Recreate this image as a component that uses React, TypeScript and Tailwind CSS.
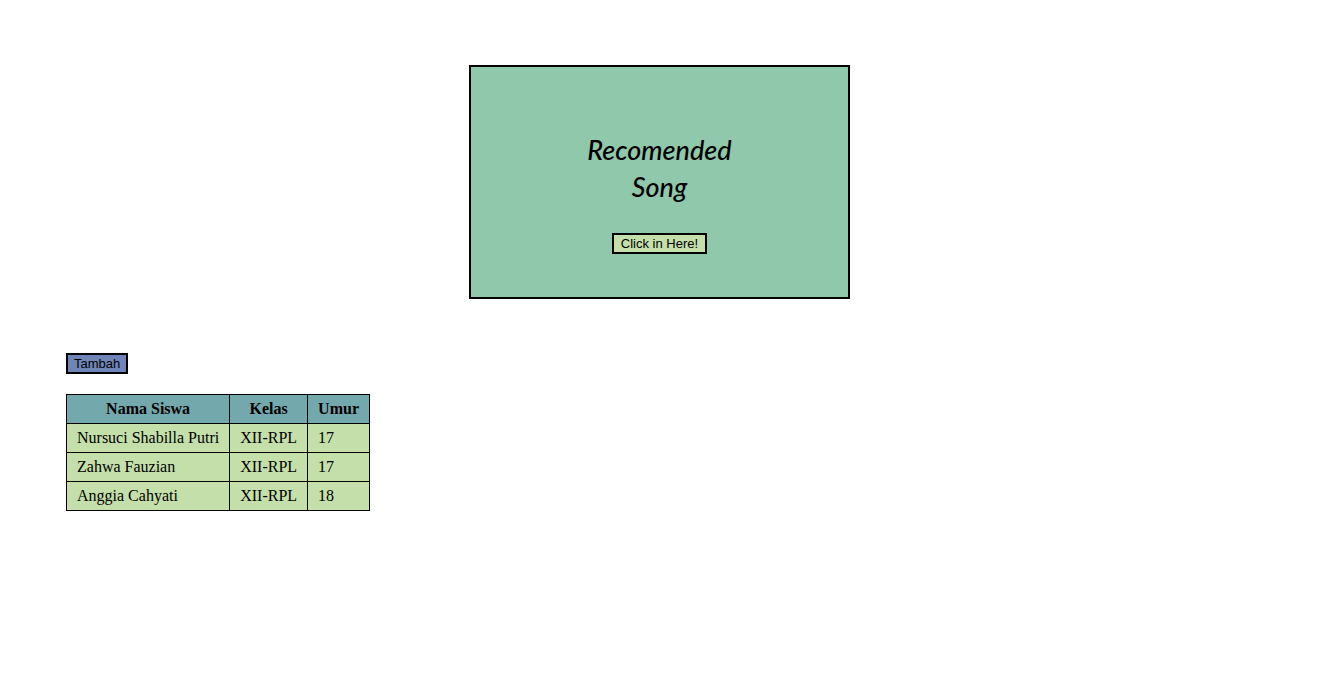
const students = [
  { name: "Nursuci Shabilla Putri", grade: "XII-RPL", age: 17 },
  { name: "Zahwa Fauzian", grade: "XII-RPL", age: 17 },
  { name: "Anggia Cahyati", grade: "XII-RPL", age: 18 },
];

const cell = "border border-black px-[10px] py-[5px]";
const button =
  "border-2 border-black font-['Liberation_Sans',sans-serif] text-[13px] leading-[17px] text-black";

function SongCard() {
  return (
    <section className="mx-auto flex w-full max-w-[381px] flex-col items-center border-2 border-black bg-[#90c8ac] pt-16 pb-[43px]">
      <h1 className="text-center font-['Lato',sans-serif] text-[27px] leading-[37px] font-medium italic">
        Recomended
        <br />
        Song
      </h1>
      <button type="button" className={`${button} mt-7 bg-[#c4dfaa] px-[7px]`}>
        Click in Here!
      </button>
    </section>
  );
}

function StudentTable() {
  return (
    <table className="mt-5 border-collapse bg-[#c4dfaa] text-[16px] leading-[18px]">
      <thead>
        <tr className="bg-[#73a9ad]">
          <th scope="col" className={cell}>Nama Siswa</th>
          <th scope="col" className={cell}>Kelas</th>
          <th scope="col" className={cell}>Umur</th>
        </tr>
      </thead>
      <tbody>
        {students.map((s) => (
          <tr key={s.name}>
            <td className={cell}>{s.name}</td>
            <td className={cell}>{s.grade}</td>
            <td className={cell}>{s.age}</td>
          </tr>
        ))}
      </tbody>
    </table>
  );
}

export default function App() {
  return (
    <main className="min-h-screen bg-white px-[66px] py-[65px] font-['Liberation_Serif',serif] text-black">
      <SongCard />
      <div className="mt-[54px] flex flex-col items-start">
        <button type="button" className={`${button} bg-[#6f85b7] px-[6px]`}>
          Tambah
        </button>
        <StudentTable />
      </div>
    </main>
  );
}
